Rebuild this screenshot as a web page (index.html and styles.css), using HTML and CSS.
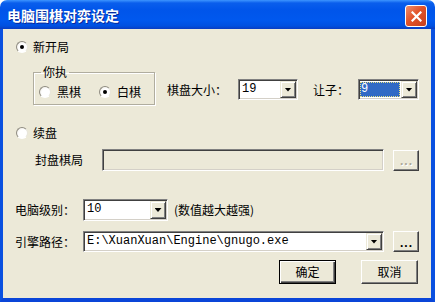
FILE: index.html
```html
<!DOCTYPE html>
<html lang="zh-CN">

<head>
    <meta charset="UTF-8">
    <title>电脑围棋对弈设定</title>
    <link rel="stylesheet" href="styles.css">
</head>

<body>
    <div class="window">
        <div class="titlebar">
            <span class="title">电脑围棋对弈设定</span>
            <span class="close">
                <svg width="11" height="11" viewBox="0 0 11 11">
                    <path d="M1.5 1.5 L9.5 9.5 M9.5 1.5 L1.5 9.5" stroke="#fff" stroke-width="2.2" stroke-linecap="square" />
                </svg>
            </span>
        </div>
        <div class="dialog">
            <!-- 新开局 -->
            <div class="row row-new">
                <span class="radio checked"></span>
                <span>新开局</span>
            </div>
            <div class="row row-group">
                <fieldset class="group">
                    <legend>你执</legend>
                    <div class="group-options">
                        <div class="option"><span class="radio"></span><span>黑棋</span></div>
                        <div class="option"><span class="radio checked"></span><span>白棋</span></div>
                    </div>
                </fieldset>
                <div class="fields">
                    <span class="label-size">棋盘大小：</span>
                    <div class="combo combo-size">
                        <span class="value">19</span>
                        <span class="drop"></span>
                    </div>
                    <span class="label-handicap">让子：</span>
                    <div class="combo combo-handicap">
                        <span class="value selected">9</span>
                        <span class="drop"></span>
                    </div>
                </div>
            </div>
            <!-- 续盘 -->
            <div class="row row-resume">
                <span class="radio"></span>
                <span>续盘</span>
            </div>
            <div class="row row-board">
                <span class="label-board">封盘棋局</span>
                <div class="edit disabled"></div>
                <span class="btn btn-more disabled">...</span>
            </div>
            <!-- 电脑设置 -->
            <div class="row row-level">
                <span class="label-field">电脑级别：</span>
                <div class="combo combo-level">
                    <span class="value">10</span>
                    <span class="drop"></span>
                </div>
                <span class="hint">(数值越大越强)</span>
            </div>
            <div class="row row-engine">
                <span class="label-field">引擎路径：</span>
                <div class="combo combo-path">
                    <span class="value">E:\XuanXuan\Engine\gnugo.exe</span>
                    <span class="drop"></span>
                </div>
                <span class="btn btn-more">...</span>
            </div>
            <div class="row row-buttons">
                <span class="btn btn-ok">确定</span>
                <span class="btn btn-cancel">取消</span>
            </div>
        </div>
    </div>
</body>

</html>
```

FILE: styles.css
```css
* {
    margin: 0;
    padding: 0;
    box-sizing: border-box;
}

html,
body {
    width: 435px;
    height: 302px;
    overflow: hidden;
    background-color: #fff;
}

body {
    font-family: "Noto Sans CJK SC", "Liberation Sans", sans-serif;
    font-size: 12px;
    line-height: 14px;
    color: #000;
}

.window {
    width: 435px;
    height: 302px;
    display: flex;
    flex-direction: column;
}

.titlebar {
    height: 29px;
    display: flex;
    align-items: center;
    justify-content: space-between;
    padding: 0 8px 0 7px;
    border-radius: 7px 7px 0 0;
    background: linear-gradient(to bottom, #3d95ff 0, #0a5eec 3px, #0055ea 10px, #0058ee 20px, #0050e0 26px, #0a3cc0 29px);
}

.title {
    color: #fff;
    font-size: 14px;
    font-weight: bold;
    line-height: 16px;
    margin-top: 1px;
    text-shadow: 1px 1px 0 #0a2a9a;
}

.close {
    width: 22px;
    height: 22px;
    margin-top: 3px;
    display: flex;
    align-items: center;
    justify-content: center;
    border: 1px solid #fff;
    border-radius: 3px;
    background: linear-gradient(135deg, #ee8f6e 0, #e2532a 45%, #c8401c 100%);
}

.dialog {
    flex: 1;
    display: flex;
    flex-direction: column;
    background-color: #ece9d8;
    border-left: 3px solid #0a50e0;
    border-right: 4px solid #0a50e0;
    border-bottom: 4px solid #0a45d8;
    box-shadow: -1px 0 0 #0831d9;
}

.row {
    display: flex;
    align-items: center;
}

/* 单选按钮 */
.radio {
    position: relative;
    width: 12px;
    height: 12px;
    flex-shrink: 0;
    border-radius: 50%;
    border: 1px solid;
    border-color: #8f8c82 #e8e6dc #fff #8f8c82;
    background: radial-gradient(circle at 60% 60%, #fff 50%, #e6e3d8 100%);
    margin-right: 5px;
}

.radio.checked::after {
    content: "";
    position: absolute;
    left: 3px;
    top: 3px;
    width: 4px;
    height: 4px;
    border-radius: 50%;
    background-color: #000;
}

.row-new {
    margin-top: 11px;
    height: 14px;
    padding-left: 13px;
}

.row-group {
    margin-top: 11px;
    align-items: flex-start;
}

.group {
    width: 122px;
    height: 40px;
    margin-left: 30px;
    padding: 6px 5px 0 5px;
    border: 1px solid #b0ad9f;
    box-shadow: 1px 1px 0 #fff, inset 1px 1px 0 #fff;
}

.group legend {
    padding: 0 2px;
    margin-left: 2px;
    line-height: 14px;
}

.group-options {
    display: flex;
    align-items: center;
    height: 14px;
}

.option {
    display: flex;
    align-items: center;
}

.option .radio {
    margin-right: 6px;
}

.option+.option {
    margin-left: 18px;
}

.fields {
    display: flex;
    align-items: center;
    margin-top: 14px;
    margin-left: 12px;
}

.label-size {
    margin-right: 11px;
}

.label-handicap {
    margin-left: 15px;
    margin-right: 9px;
}

/* 下拉框 */
.combo {
    display: flex;
    height: 21px;
    padding: 1px;
    background-color: #fff;
    border: 1px solid;
    border-color: #808080 #fff #fff #808080;
    box-shadow: inset 1px 1px 0 #404040, inset -1px -1px 0 #d4d0c8;
}

.combo .value {
    flex: 1;
    padding-left: 2px;
    font-family: "Liberation Mono", monospace;
    font-size: 12px;
    line-height: 17px;
    white-space: nowrap;
    overflow: hidden;
}

.combo .value.selected {
    margin: 1px 1px 1px 0;
    padding-left: 1px;
    line-height: 15px;
    background-color: #316ac5;
    color: #fff;
    outline: 1px dotted #e8e080;
    outline-offset: -1px;
}

.drop {
    width: 16px;
    flex-shrink: 0;
    display: flex;
    align-items: center;
    justify-content: center;
    background-color: #ece9d8;
    border: 1px solid;
    border-color: #ece9d8 #404040 #404040 #ece9d8;
    box-shadow: inset 1px 1px 0 #fff, inset -1px -1px 0 #808080;
}

.drop::after {
    content: "";
    width: 7px;
    height: 4px;
    background-color: #000;
    clip-path: polygon(0 0, 100% 0, 50% 100%);
}

.combo-size {
    width: 60px;
}

.combo-handicap {
    width: 61px;
}

.row-resume {
    margin-top: 21px;
    height: 14px;
    padding-left: 13px;
}

.row-board {
    margin-top: 9px;
    height: 22px;
}

.label-board {
    margin-left: 32px;
    width: 67px;
}

.edit {
    width: 282px;
    height: 22px;
    border: 1px solid;
    border-color: #808080 #fff #fff #808080;
    box-shadow: inset 1px 1px 0 #404040, inset -1px -1px 0 #d4d0c8;
    background-color: #ece9d8;
}

/* 按钮 */
.btn {
    display: flex;
    align-items: center;
    justify-content: center;
    background-color: #ece9d8;
    border: 1px solid;
    border-color: #fff #404040 #404040 #fff;
    box-shadow: inset -1px -1px 0 #808080;
}

.btn-more {
    width: 26px;
    height: 21px;
    margin-left: 9px;
    font-family: "Liberation Sans", sans-serif;
    font-weight: bold;
    letter-spacing: 1px;
    padding-left: 1px;
    line-height: 12px;
    padding-top: 2px;
}

.btn-more.disabled {
    color: #aca899;
    text-shadow: 1px 1px 0 #fff;
}

.row-level {
    margin-top: 28px;
    height: 22px;
}

.label-field {
    margin-left: 12px;
    width: 68px;
}

.combo-level {
    width: 85px;
    height: 22px;
}

.hint {
    margin-left: 6px;
}

.row-engine {
    margin-top: 10px;
    height: 21px;
}

.combo-path {
    width: 301px;
}

.row-buttons {
    margin-top: 8px;
    justify-content: flex-end;
    padding-right: 13px;
}

.btn-ok,
.btn-cancel {
    width: 57px;
    height: 24px;
}

.btn-ok {
    border-color: #000;
    box-shadow: inset 1px 1px 0 #fff, inset -1px -1px 0 #404040, inset -2px -2px 0 #808080;
}

.btn-cancel {
    margin-left: 25px;
}
```
